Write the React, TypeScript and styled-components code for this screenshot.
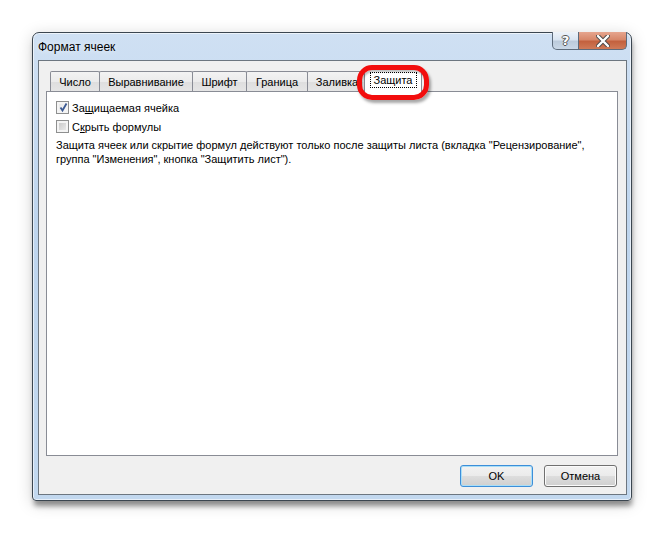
import React from "react";
import styled, { createGlobalStyle, css } from "styled-components";

const Global = createGlobalStyle`
  html, body { margin: 0; padding: 0; background: #ffffff; }
  body { font-family: "Liberation Sans", Arial, sans-serif; font-size: 11px; color: #000; }
`;

const Page = styled.div`
  width: 666px;
  height: 535px;
  padding: 32px 0 0 32px;
  box-sizing: border-box;
  overflow: hidden;
`;

const Window = styled.div`
  width: 600px;
  height: 469px;
  box-sizing: border-box;
  border: 1px solid #3b4650;
  border-radius: 7px 7px 4px 4px;
  background: linear-gradient(180deg, #cfe0f3 0%, #bed5ee 40%, #c2d8ef 100%);
  padding: 0 4px 5px 5px;
  display: flex;
  flex-direction: column;
  box-shadow: 0 0 0 1px rgba(255, 255, 255, 0.6) inset, 1px 6px 5px -1px rgba(0, 0, 0, 0.38),
    0 3px 16px rgba(0, 0, 0, 0.18);
`;

const TitleBar = styled.div`
  height: 27px;
  display: flex;
  align-items: flex-start;
`;

const Title = styled.div`
  padding-top: 7px;
  font-size: 12px;
  color: #000;
  flex: 1;
  text-shadow: 0 0 6px rgba(255, 255, 255, 0.9);
`;

const CaptionButtons = styled.div`
  display: flex;
  margin-top: -1px;
`;

const CaptionButton = styled.div<{ $close?: boolean }>`
  height: 18px;
  width: ${(p) => (p.$close ? "48px" : "27px")};
  box-sizing: border-box;
  border: 1px solid #5d6b7b;
  border-top: none;
  display: flex;
  align-items: center;
  justify-content: center;
  ${(p) =>
    p.$close
      ? css`
          border-radius: 0 0 5px 0;
          border-left: none;
          background: linear-gradient(180deg, #e6a58e 0%, #d7876a 45%, #c3613e 55%, #cf7a58 100%);
        `
      : css`
          border-radius: 0 0 0 5px;
          background: linear-gradient(180deg, #eef3f9 0%, #dae5f1 45%, #bccbdc 55%, #cad8e7 100%);
        `}
`;

const HelpGlyph = styled.span`
  font-family: "DejaVu Sans", sans-serif;
  font-weight: bold;
  font-size: 13px;
  color: #ffffff;
  text-shadow: 1px 0 0 #555, -1px 0 0 #555, 0 1px 0 #555, 0 -1px 0 #555;
  line-height: 1;
`;

const Client = styled.div`
  flex: 1;
  border: 1px solid #6c7680;
  background: #f0f0f0;
  padding: 6px 8px 7px 7px;
  display: flex;
  flex-direction: column;
`;

const TabControl = styled.div`
  flex: 1;
  display: flex;
  flex-direction: column;
`;

const TabStrip = styled.div`
  display: flex;
  align-items: flex-end;
  height: 24px;
  padding-left: 4px;
  position: relative;
  z-index: 2;
`;

const Tab = styled.div<{ $w: number; $active?: boolean }>`
  position: relative;
  width: ${(p) => p.$w}px;
  box-sizing: border-box;
  border: 1px solid #898c95;
  border-bottom: none;
  border-radius: 2px 2px 0 0;
  display: flex;
  align-items: center;
  justify-content: center;
  font-size: 11px;
  color: #000;
  ${(p) =>
    p.$active
      ? css`
          height: 24px;
          margin: 0 -2px -1px -2px;
          background: #ffffff;
          z-index: 3;
          padding-bottom: 2px;
        `
      : css`
          height: 20px;
          margin-right: -1px;
          background: linear-gradient(180deg, #f3f3f3 0%, #ebebeb 50%, #dedede 51%, #e5e5e5 100%);
          padding-top: 1px;
        `}
`;

const FocusText = styled.span`
  outline: 1px dotted #000;
  outline-offset: 1px;
  padding: 0 2px;
`;

const Highlight = styled.div`
  position: absolute;
  left: -8px;
  right: -8px;
  top: -4px;
  bottom: -8px;
  border: 5px solid #f20d0d;
  border-radius: 15px;
  box-shadow: 2px 3px 3px rgba(0, 0, 0, 0.35), inset 1px 2px 2px rgba(0, 0, 0, 0.25);
  pointer-events: none;
`;

const TabPanel = styled.div`
  flex: 1;
  border: 1px solid #898c95;
  background: #ffffff;
  padding: 6px 9px;
  display: flex;
  flex-direction: column;
`;

const CheckRow = styled.label`
  display: flex;
  align-items: center;
  height: 19px;
  gap: 3px;
`;

const CheckBox = styled.span<{ $checked?: boolean }>`
  width: 13px;
  height: 13px;
  box-sizing: border-box;
  border: 1px solid #8e8f8f;
  background: #f4f4f4;
  padding: 2px;
  display: flex;
  &::before {
    content: "";
    flex: 1;
    background: ${(p) =>
      p.$checked
        ? "linear-gradient(135deg, #e8e8e8 0%, #f8f8f8 100%)"
        : "linear-gradient(135deg, #cbcbcb 0%, #e8e8e8 100%)"};
  }
  position: relative;
`;

const Check = styled.svg`
  position: absolute;
  left: 1px;
  top: 0px;
`;

const Accel = styled.span`
  text-decoration: underline;
`;

const Note = styled.p`
  margin: 2px 0 0 0;
  line-height: 14px;
  font-size: 11px;
  width: 560px;
`;

const ButtonRow = styled.div`
  display: flex;
  justify-content: flex-end;
  gap: 11px;
  margin-top: 9px;
  padding-right: 1px;
`;

const Button = styled.button<{ $default?: boolean }>`
  width: 73px;
  height: 22px;
  box-sizing: border-box;
  border-radius: 3px;
  font-family: "Liberation Sans", Arial, sans-serif;
  font-size: 11px;
  color: #000;
  padding: 0;
  background: linear-gradient(180deg, #f2f2f2 0%, #ebebeb 48%, #dddddd 52%, #cfcfcf 100%);
  border: 1px solid ${(p) => (p.$default ? "#3c8ed9" : "#707070")};
  box-shadow: inset 0 0 0 1px ${(p) => (p.$default ? "#a9def7" : "#fbfbfb")};
`;

const tabs = [
  { label: "Число", w: 50 },
  { label: "Выравнивание", w: 94 },
  { label: "Шрифт", w: 55 },
  { label: "Граница", w: 62 },
  { label: "Заливка", w: 60 },
];

export default function App() {
  return (
    <Page>
      <Global />
      <Window>
        <TitleBar>
          <Title>Формат ячеек</Title>
          <CaptionButtons>
            <CaptionButton>
              <HelpGlyph>?</HelpGlyph>
            </CaptionButton>
            <CaptionButton $close>
              <svg width="14" height="12" viewBox="0 0 14 12">
                <path d="M2 1 L12 11 M12 1 L2 11" stroke="#4a4a4a" strokeWidth="4.2" strokeLinecap="round" />
                <path d="M2 1 L12 11 M12 1 L2 11" stroke="#ffffff" strokeWidth="2.4" strokeLinecap="round" />
              </svg>
            </CaptionButton>
          </CaptionButtons>
        </TitleBar>
        <Client>
          <TabControl>
            <TabStrip>
              {tabs.map((t) => (
                <Tab key={t.label} $w={t.w}>
                  {t.label}
                </Tab>
              ))}
              <Tab $w={58} $active>
                <FocusText>Защита</FocusText>
                <Highlight />
              </Tab>
            </TabStrip>
            <TabPanel>
              <CheckRow>
                <CheckBox $checked>
                  <Check width="11" height="11" viewBox="0 0 11 11">
                    <path d="M2.5 5.5 L4.5 8.5 L8.5 1.5" fill="none" stroke="#3c5a93" strokeWidth="1.8" />
                  </Check>
                </CheckBox>
                <span>
                  За<Accel>щ</Accel>ищаемая ячейка
                </span>
              </CheckRow>
              <CheckRow>
                <CheckBox />
                <span>
                  С<Accel>к</Accel>рыть формулы
                </span>
              </CheckRow>
              <Note>
                Защита ячеек или скрытие формул действуют только после защиты листа (вкладка "Рецензирование",
                группа "Изменения", кнопка "Защитить лист").
              </Note>
            </TabPanel>
          </TabControl>
          <ButtonRow>
            <Button $default>OK</Button>
            <Button>Отмена</Button>
          </ButtonRow>
        </Client>
      </Window>
    </Page>
  );
}
